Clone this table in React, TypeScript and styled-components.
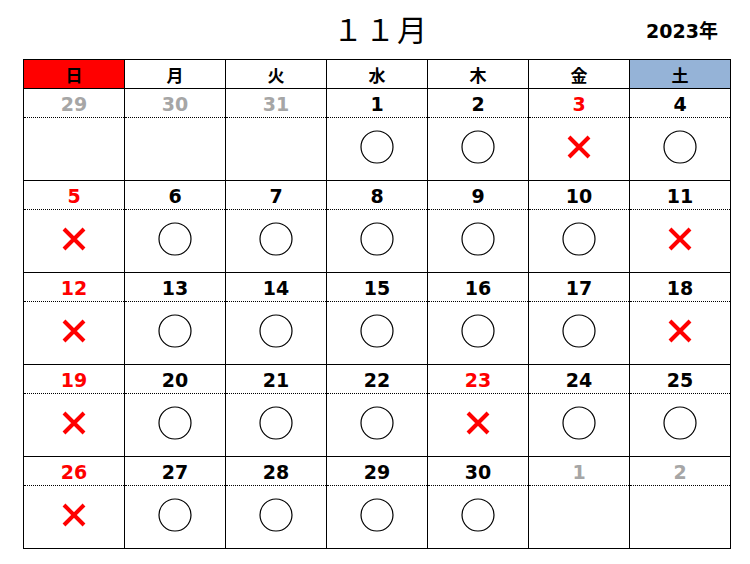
import React from "react";
import styled, { createGlobalStyle } from "styled-components";

const GlobalStyle = createGlobalStyle`
  body {
    margin: 0;
    background: #fff;
    font-family: "DejaVu Sans", "Noto Sans CJK JP", sans-serif;
  }
`;

type Mark = "o" | "x" | null;
type Tone = "normal" | "holiday" | "muted";

interface Day {
  date: number;
  tone: Tone;
  mark: Mark;
}

const weekdays = ["日", "月", "火", "水", "木", "金", "土"];

// 休業日 = x, 営業日 = o
const weeks: Day[][] = [
  [
    { date: 29, tone: "muted", mark: null },
    { date: 30, tone: "muted", mark: null },
    { date: 31, tone: "muted", mark: null },
    { date: 1, tone: "normal", mark: "o" },
    { date: 2, tone: "normal", mark: "o" },
    { date: 3, tone: "holiday", mark: "x" },
    { date: 4, tone: "normal", mark: "o" },
  ],
  [
    { date: 5, tone: "holiday", mark: "x" },
    { date: 6, tone: "normal", mark: "o" },
    { date: 7, tone: "normal", mark: "o" },
    { date: 8, tone: "normal", mark: "o" },
    { date: 9, tone: "normal", mark: "o" },
    { date: 10, tone: "normal", mark: "o" },
    { date: 11, tone: "normal", mark: "x" },
  ],
  [
    { date: 12, tone: "holiday", mark: "x" },
    { date: 13, tone: "normal", mark: "o" },
    { date: 14, tone: "normal", mark: "o" },
    { date: 15, tone: "normal", mark: "o" },
    { date: 16, tone: "normal", mark: "o" },
    { date: 17, tone: "normal", mark: "o" },
    { date: 18, tone: "normal", mark: "x" },
  ],
  [
    { date: 19, tone: "holiday", mark: "x" },
    { date: 20, tone: "normal", mark: "o" },
    { date: 21, tone: "normal", mark: "o" },
    { date: 22, tone: "normal", mark: "o" },
    { date: 23, tone: "holiday", mark: "x" },
    { date: 24, tone: "normal", mark: "o" },
    { date: 25, tone: "normal", mark: "o" },
  ],
  [
    { date: 26, tone: "holiday", mark: "x" },
    { date: 27, tone: "normal", mark: "o" },
    { date: 28, tone: "normal", mark: "o" },
    { date: 29, tone: "normal", mark: "o" },
    { date: 30, tone: "normal", mark: "o" },
    { date: 1, tone: "muted", mark: null },
    { date: 2, tone: "muted", mark: null },
  ],
];

const toneColor: Record<Tone, string> = {
  normal: "#000",
  holiday: "#ff0000",
  muted: "#a6a6a6",
};

const Page = styled.div`
  padding: 0 0 0 23px;
  width: 708px;
`;

const TitleBar = styled.div`
  display: grid;
  grid-template-columns: 1fr auto 1fr;
  align-items: center;
  height: 59px;
`;

const Month = styled.h1`
  grid-column: 2;
  margin: 0 0 4px 8px;
  font-family: "Noto Sans CJK JP", sans-serif;
  font-weight: 400;
  font-size: 30px;
  letter-spacing: 2px;
  color: #000;
`;

const Year = styled.div`
  grid-column: 3;
  justify-self: end;
  margin: 0 13px 0 0;
  font-family: "DejaVu Sans", "Noto Sans CJK JP", sans-serif;
  font-weight: 700;
  font-size: 19px;
`;

const Grid = styled.div`
  display: grid;
  grid-template-columns: repeat(7, 101px);
  border-left: 1px solid #000;
  border-top: 1px solid #000;
`;

const HeadCell = styled.div<{ $bg: string }>`
  height: 28px;
  display: flex;
  align-items: center;
  justify-content: center;
  background: ${(p) => p.$bg};
  border-right: 1px solid #000;
  border-bottom: 1px solid #000;
  font-family: "Noto Sans CJK JP", sans-serif;
  font-weight: 700;
  font-size: 17px;
`;

const DayCell = styled.div`
  display: flex;
  flex-direction: column;
  border-right: 1px solid #000;
  border-bottom: 1px solid #000;
`;

const DateLabel = styled.div<{ $color: string }>`
  height: 29px;
  display: flex;
  align-items: center;
  justify-content: center;
  border-bottom: 1px dotted #000;
  color: ${(p) => p.$color};
  font-weight: 700;
  font-size: 19px;
  padding-top: 1px;
  box-sizing: border-box;
`;

const MarkArea = styled.div`
  height: 62px;
  display: flex;
  align-items: center;
  justify-content: center;
  padding-bottom: 4px;
  box-sizing: border-box;
`;

const Circle = () => (
  <svg width="34" height="34" viewBox="0 0 34 34">
    <circle cx="17" cy="17" r="16" fill="none" stroke="#000" strokeWidth="1.2" />
  </svg>
);

const Cross = () => (
  <svg width="24" height="24" viewBox="0 0 24 24">
    <path d="M2 2 L22 22 M22 2 L2 22" stroke="#ff0000" strokeWidth="4" />
  </svg>
);

const App = () => {
  return (
    <Page>
      <GlobalStyle />
      <TitleBar>
        <Month>１１月</Month>
        <Year>2023年</Year>
      </TitleBar>
      <Grid>
        {weekdays.map((w, i) => (
          <HeadCell
            key={w}
            $bg={i === 0 ? "#ff0000" : i === 6 ? "#95b3d7" : "#fff"}
          >
            {w}
          </HeadCell>
        ))}
        {weeks.map((week, wi) =>
          week.map((d, di) => (
            <DayCell key={`${wi}-${di}`}>
              <DateLabel $color={toneColor[d.tone]}>{d.date}</DateLabel>
              <MarkArea>
                {d.mark === "o" && <Circle />}
                {d.mark === "x" && <Cross />}
              </MarkArea>
            </DayCell>
          ))
        )}
      </Grid>
    </Page>
  );
};

export default App;
